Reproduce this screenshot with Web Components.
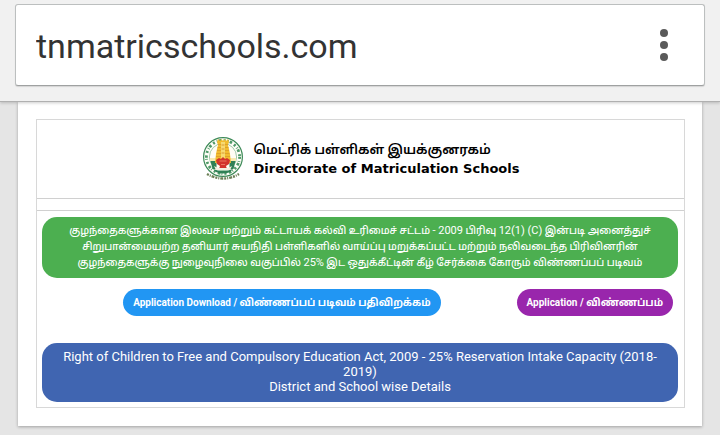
<!DOCTYPE html>
<html lang="ta">
<head>
<meta charset="utf-8">
<meta name="viewport" content="width=device-width, initial-scale=1">
<title>Directorate of Matriculation Schools</title>
<style>
  body {
    margin: 0;
    background: #e5e5e5;
    color: #000;
    font-family: Roboto, "Noto Sans Tamil", "Noto Sans", sans-serif;
  }
  .latin {
    font-size: 11px;
    font-weight: 400;
    line-height: 1;
  }
</style>
</head>
<body>
<address-bar url="tnmatricschools.com"></address-bar>
<page-card>
  <school-header slot="header">
    <span slot="tamil">மெட்ரிக் பள்ளிகள் இயக்குனரகம்</span>
    <span slot="english">Directorate of Matriculation Schools</span>
  </school-header>
  <notice-panel lang="ta" color="green">குழந்தைகளுக்கான இலவச மற்றும் கட்டாயக் கல்வி உரிமைச் சட்டம் <span class="latin">- 2009</span> பிரிவு <span class="latin">12(1) (C)</span> இன்படி அனைத்துச்<br>சிறுபான்மையற்ற தனியார் சுயநிதி பள்ளிகளில் வாய்ப்பு மறுக்கப்பட்ட மற்றும் நலிவடைந்த பிரிவினரின்<br>குழந்தைகளுக்கு நுழைவுநிலை வகுப்பில் <span class="latin">25%</span> இட ஒதுக்கீட்டின் கீழ் சேர்க்கை கோரும் விண்ணப்பப் படிவம்</notice-panel>
  <button-row>
    <pill-button color="blue">Application Download / விண்ணப்பப் படிவம் பதிவிறக்கம்</pill-button>
    <pill-button color="purple">Application / விண்ணப்பம்</pill-button>
  </button-row>
  <notice-panel lang="en" color="indigo">Right of Children to Free and Compulsory Education Act, 2009 - 25% Reservation Intake Capacity (2018-<wbr>2019)<br>District and School wise Details</notice-panel>
</page-card>

<script>
class AddressBar extends HTMLElement {
  constructor() {
    super();
    this.attachShadow({ mode: "open" });
    this.shadowRoot.innerHTML = `
      <style>
        :host {
          display: block;
          position: relative;
          padding: 4px 15px 15px;
          background: #f1f1f1;
          border-bottom: 1px solid #b0b0b0;
          box-shadow: 0 1px 3px rgba(0,0,0,0.2);
        }
        form {
          display: flex;
          align-items: center;
          box-sizing: border-box;
          height: 82px;
          padding: 0 20px;
          background: white;
          border: 1px solid #bcbfbf;
          border-bottom-color: #9fa1a1;
          border-radius: 3px;
          box-shadow: 0 1px 1px rgba(0,0,0,0.12);
        }
        input {
          flex: 1;
          min-width: 0;
          padding: 2px 0 0;
          border: none;
          outline: none;
          background: none;
          color: #333;
          font: 34px/48px Roboto, sans-serif;
        }
        button {
          display: flex;
          padding: 0 16px;
          border: none;
          background: none;
        }
      </style>
      <form>
        <input type="text" aria-label="Address">
        <button type="button" aria-label="Menu">
          <svg width="8" height="32" viewBox="0 0 8 32" fill="#5a5a5a">
            <circle cx="4" cy="4" r="4"/><circle cx="4" cy="16" r="4"/><circle cx="4" cy="28" r="4"/>
          </svg>
        </button>
      </form>
    `;
  }

  connectedCallback() {
    this.shadowRoot.querySelector("input").value = this.getAttribute("url");
  }
}

class PageCard extends HTMLElement {
  constructor() {
    super();
    this.attachShadow({ mode: "open" });
    this.shadowRoot.innerHTML = `
      <style>
        :host {
          display: block;
          margin: 0 18px 8px;
          padding: 17px 17px 18px 18px;
          background: white;
          box-shadow: 0 1px 3px rgba(0,0,0,0.3);
        }
        main {
          border: 1px solid #d8d8d8;
        }
        header {
          border-bottom: 1px solid #d0d0d0;
        }
        .spacer {
          height: 11px;
          border-bottom: 1px solid #d0d0d0;
        }
        .content {
          padding: 6px 6px 5px 5px;
        }
      </style>
      <main>
        <header><slot name="header"></slot></header>
        <div class="spacer"></div>
        <div class="content"><slot></slot></div>
      </main>
    `;
  }
}

class SchoolHeader extends HTMLElement {
  constructor() {
    super();
    this.attachShadow({ mode: "open" });
    this.shadowRoot.innerHTML = `
      <style>
        :host {
          display: flex;
          justify-content: center;
          align-items: center;
          gap: 10px;
          padding: 16px 0;
        }
        h1 {
          display: grid;
          margin: 0;
          font: bold 13px/16px "DejaVu Sans", sans-serif;
        }
        .tamil {
          font: 600 13px/20px "Noto Sans Tamil", "Noto Sans", sans-serif;
        }
      </style>
      <svg width="42" height="46" viewBox="0 0 42 46" aria-hidden="true">
        <circle cx="21" cy="21" r="19.4" fill="#fffef8" stroke="#3d8a58" stroke-width="1.2"/>
        <circle cx="21" cy="21" r="16.6" fill="none" stroke="#4f9a68" stroke-width="2.8" stroke-dasharray="2 2.2 .8 1.2 2.6 2.4"/>
        <circle cx="21" cy="21" r="13.6" fill="#fffdf4" stroke="#86bb96" stroke-width=".8"/>
        <path d="M8.500 25h6v8h-4zM27.500 25h6l-2 8h-4z" fill="#2f8055"/>
        <path d="M8 22h7v3H8zM27 22h7v3h-7z" fill="#f8eab0"/>
        <path d="M15 6l1-3 2 2 1.500-2L21 5l1.500-2L24 5l2-2 1 3-1 3 1 4 1 5 1 9H13l1-9 1-5 1-4z" fill="#f2bc2e"/>
        <path d="M16 8.500h10M15.500 11.500h11M15 14.500h12M14.500 17.500h13M14 20.500h14" stroke="#d6962a" stroke-width=".7"/>
        <path d="M19 6h4v16h-4z" fill="#f7da72"/>
        <path d="M19.500 9h3m-3 4h3m-3 4h3" stroke="#d99a30"/>
        <path d="M14 24l3-2 2 1 2-2 2 2 2-1 3 2-1 4-3 2 1 3h-8l1-3-3-2z" fill="#d2332c"/>
        <path d="M17.500 25h7M19 28.500h4" stroke="#f0876a" stroke-width=".8"/>
        <path d="M12 30l4 2h10l4-2-2 4H14z" fill="#f5efe0"/>
        <path d="M11 33q10 4 20 0l-3 3q-7 3-14 0z" fill="#2f8055"/>
        <path d="M5 38q16 9 32 0" fill="none" stroke="#6b7f55" stroke-width="2.400" stroke-dasharray="2 1 1 1 3 1"/>
      </svg>
      <h1>
        <span class="tamil" lang="ta"><slot name="tamil"></slot></span>
        <span lang="en"><slot name="english"></slot></span>
      </h1>
    `;
  }
}

class NoticePanel extends HTMLElement {
  constructor() {
    super();
    this.attachShadow({ mode: "open" });
    this.shadowRoot.innerHTML = `
      <style>
        :host {
          display: block;
          padding: 6px 12px 8px;
          border-radius: 15px;
          color: white;
          font-size: 13px;
          line-height: 15px;
          text-align: center;
        }
        :host([color="green"]) {
          padding: 6px 12px 7px;
          background: #4caf50;
          font-size: 10px;
          font-weight: 500;
          line-height: 16px;
        }
        :host([color="indigo"]) {
          background: #4065b1;
        }
      </style>
      <slot></slot>
    `;
  }
}

class ButtonRow extends HTMLElement {
  constructor() {
    super();
    this.attachShadow({ mode: "open" });
    this.shadowRoot.innerHTML = `
      <style>
        :host {
          display: flex;
          justify-content: flex-end;
          gap: 76px;
          padding: 11px 5px 27px;
        }
      </style>
      <slot></slot>
    `;
  }
}

class PillButton extends HTMLElement {
  constructor() {
    super();
    this.attachShadow({ mode: "open" });
    this.shadowRoot.innerHTML = `
      <style>
        :host {
          display: block;
        }
        button {
          padding: 5px 10px;
          border: none;
          border-radius: 14px;
          background: #2196f3;
          color: white;
          font: bold 10px/17px Roboto, "Noto Sans Tamil", "Noto Sans", sans-serif;
          white-space: nowrap;
        }
        :host([color="purple"]) button {
          background: #9926ac;
        }
      </style>
      <button type="button"><slot></slot></button>
    `;
  }
}

customElements.define("address-bar", AddressBar);
customElements.define("page-card", PageCard);
customElements.define("school-header", SchoolHeader);
customElements.define("notice-panel", NoticePanel);
customElements.define("button-row", ButtonRow);
customElements.define("pill-button", PillButton);
</script>
</body>
</html>
